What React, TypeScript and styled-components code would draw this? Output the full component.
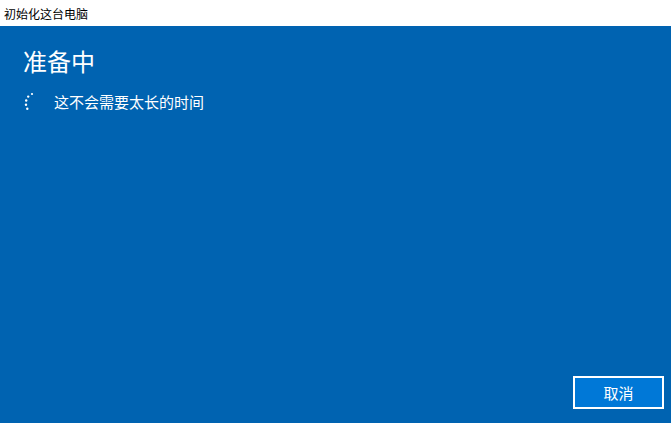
import React from 'react';
import styled, { createGlobalStyle } from 'styled-components';

const GlobalStyle = createGlobalStyle`
  html, body {
    margin: 0;
    padding: 0;
    height: 100%;
    overflow: hidden;
  }
  body {
    font-family: "Noto Sans CJK SC", "Liberation Sans", sans-serif;
  }
  #root {
    height: 100%;
  }
`;

const Window = styled.div`
  display: flex;
  flex-direction: column;
  width: 671px;
  height: 423px;
`;

const TitleBar = styled.div`
  height: 26px;
  flex: none;
  display: flex;
  align-items: center;
  padding-left: 4px;
  background: #ffffff;
  color: #000000;
  font-size: 12px;
`;

const Body = styled.div`
  flex: 1;
  display: flex;
  flex-direction: column;
  background: #0063b1;
  color: #ffffff;
  padding: 18px 7px 14px 23px;
`;

const Heading = styled.h1`
  margin: 0;
  font-size: 24px;
  font-weight: 400;
  line-height: 34px;
`;

const StatusRow = styled.div`
  display: flex;
  align-items: center;
  gap: 19px;
  margin-top: 13px;
  font-size: 15px;
`;

const Spinner = styled.svg`
  width: 12px;
  height: 20px;
  flex: none;
`;

const Footer = styled.div`
  margin-top: auto;
  display: flex;
  justify-content: flex-end;
`;

const Button = styled.button`
  width: 91px;
  height: 33px;
  border: 2px solid #ffffff;
  background: #0078d7;
  color: #ffffff;
  font-family: inherit;
  font-size: 15px;
  padding: 0;
`;

const spinnerDots = [
  { x: 9, y: 2, r: 1.1 },
  { x: 5.2, y: 4.6, r: 1.2 },
  { x: 3.2, y: 8.5, r: 1.2 },
  { x: 3, y: 12.8, r: 1.2 },
  { x: 4.3, y: 16.8, r: 1.2 },
];

export default function App() {
  return (
    <>
      <GlobalStyle />
      <Window>
        <TitleBar>初始化这台电脑</TitleBar>
        <Body>
          <Heading>准备中</Heading>
          <StatusRow>
            <Spinner viewBox="0 0 12 20">
              {spinnerDots.map((d, i) => (
                <circle key={i} cx={d.x} cy={d.y} r={d.r} fill="#ffffff" />
              ))}
            </Spinner>
            <span>这不会需要太长的时间</span>
          </StatusRow>
          <Footer>
            <Button>取消</Button>
          </Footer>
        </Body>
      </Window>
    </>
  );
}
